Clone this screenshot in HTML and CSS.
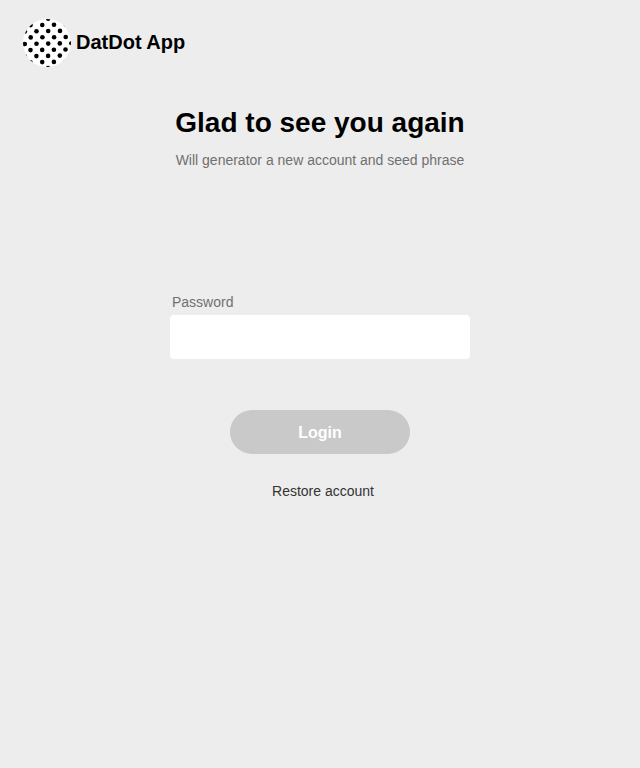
FILE: index.html
```html
<!DOCTYPE html>
<html lang="en">
<head>
<meta charset="utf-8">
<title>DatDot App</title>
<link rel="stylesheet" href="styles.css">
</head>
<body>
<header class="brand">
<svg class="logo" viewBox="0 0 48 48" aria-hidden="true">
<defs>
<clipPath id="disc"><circle cx="24" cy="24" r="24"/></clipPath>
</defs>
<g clip-path="url(#disc)">
<rect width="48" height="48" fill="#fff"/>
<circle cx="25.2" cy="-.4" r="2.3"/>
<circle cx="7.6" cy="6.1" r="2.3"/><circle cx="19.3" cy="6" r="2.3"/><circle cx="31" cy="5.8" r="2.3"/><circle cx="42.7" cy="5.6" r="2.3"/>
<circle cx="1.9" cy="12.4" r="2.3"/><circle cx="13.5" cy="12.2" r="2.3"/><circle cx="25.2" cy="12" r="2.3"/><circle cx="37" cy="11.9" r="2.3"/>
<circle cx="7.7" cy="18.4" r="2.3"/><circle cx="19.4" cy="18.3" r="2.3"/><circle cx="31.1" cy="18.2" r="2.3"/><circle cx="42.7" cy="18" r="2.3"/>
<circle cx="1.8" cy="25" r="2.3"/><circle cx="13.5" cy="24.8" r="2.3"/><circle cx="25.2" cy="24.6" r="2.3"/><circle cx="36.8" cy="24.4" r="2.3"/><circle cx="48.4" cy="24.2" r="2.3"/>
<circle cx="7.5" cy="31.1" r="2.3"/><circle cx="19.2" cy="30.9" r="2.3"/><circle cx="30.9" cy="30.7" r="2.3"/><circle cx="42.5" cy="30.5" r="2.3"/>
<circle cx="1.7" cy="37.3" r="2.3"/><circle cx="13.4" cy="37.1" r="2.3"/><circle cx="25.1" cy="36.9" r="2.3"/><circle cx="36.8" cy="36.6" r="2.3"/>
<circle cx="7.5" cy="43.4" r="2.3"/><circle cx="19.2" cy="43.1" r="2.3"/><circle cx="30.9" cy="42.9" r="2.3"/><circle cx="42.6" cy="42.7" r="2.3"/>
<circle cx="25.1" cy="49.1" r="2.3"/>
</g>
</svg>
<span class="name">DatDot App</span>
</header>
<main class="content">
<h1 class="title">Glad to see you again</h1>
<p class="subtitle">Will generator a new account and seed phrase</p>
<form class="form">
<label class="label" for="password">Password</label>
<input class="input" id="password" type="password">
<button class="login" type="button">Login</button>
</form>
<a class="restore">Restore account</a>
</main>
</body>
</html>
```

FILE: styles.css
```css
body {
  margin: 0;
  min-height: 768px;
  background: #ededed;
  font-family: "Liberation Sans", Arial, sans-serif;
  color: #000;
}
.brand {
  display: flex;
  align-items: center;
  gap: 5px;
  padding: 19px 23px 0;
  height: 48px;
}
.logo { width: 48px; height: 48px; }
.name { font-size: 20px; line-height: 24px; font-weight: 700; margin-top: -2px; }
.content { display: flex; flex-direction: column; align-items: center; }
.title { margin: 40px 0 0; font-size: 28px; line-height: 32px; }
.subtitle { margin: 13px 0 0; font-size: 14px; line-height: 16px; color: #707070; }
.form { display: flex; flex-direction: column; width: 300px; margin-top: 126px; }
.label { margin-left: 2px; font-size: 14px; line-height: 16px; color: #707070; }
.input { box-sizing: border-box; height: 44px; margin-top: 5px; padding: 0 12px; border: 0; border-radius: 4px; background: #fff; }
.login {
  align-self: center;
  width: 180px;
  height: 44px;
  margin-top: 51px;
  padding: 2px 0 0;
  border: 0;
  border-radius: 22px;
  background: #c9c9c9;
  color: #fff;
  font: 700 16px/18px "Liberation Sans", Arial, sans-serif;
}
.restore { margin: 29px 0 0 6px; font-size: 14px; line-height: 16px; color: #333; }
```
